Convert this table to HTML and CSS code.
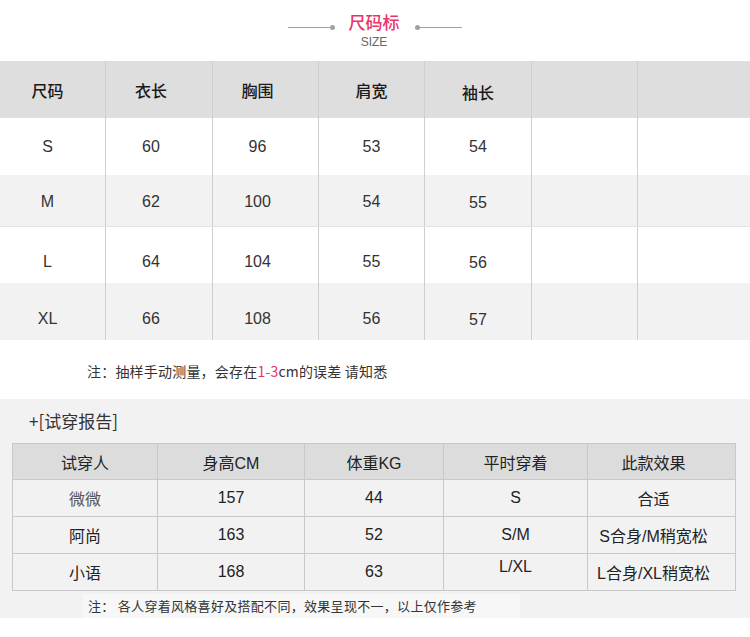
FILE: index.html
```html
<!DOCTYPE html>
<html lang="zh">
<head>
<meta charset="utf-8">
<title>尺码标</title>
<link rel="stylesheet" href="styles.css">
</head>
<body>
<header class="title-bar">
  <span class="line"></span><span class="dot"></span>
  <div class="title">
    <div class="title-cn">尺码标</div>
    <div class="title-en">SIZE</div>
  </div>
  <span class="dot"></span><span class="line"></span>
</header>

<div class="size-table">
  <div class="srow head">
    <div class="c">尺码</div><div class="c">衣长</div><div class="c">胸围</div><div class="c">肩宽</div><div class="c low2">袖长</div><div class="c"></div><div class="c"></div>
  </div>
  <div class="srow white r1">
    <div class="c">S</div><div class="c">60</div><div class="c">96</div><div class="c">53</div><div class="c">54</div><div class="c"></div><div class="c"></div>
  </div>
  <div class="srow gray r2">
    <div class="c">M</div><div class="c">62</div><div class="c">100</div><div class="c">54</div><div class="c low2">55</div><div class="c"></div><div class="c"></div>
  </div>
  <div class="srow white r3">
    <div class="c">L</div><div class="c">64</div><div class="c">104</div><div class="c">55</div><div class="c low">56</div><div class="c"></div><div class="c"></div>
  </div>
  <div class="srow gray r4">
    <div class="c">XL</div><div class="c">66</div><div class="c">108</div><div class="c">56</div><div class="c low">57</div><div class="c"></div><div class="c"></div>
  </div>
</div>

<p class="note">注：抽样手动测量，会存在<span class="red">1-3</span>cm的误差 请知悉</p>

<section class="report">
  <div class="report-title">+[试穿报告]</div>
  <div class="rtable">
    <div class="rrow rhead">
      <div class="rc">试穿人</div><div class="rc">身高CM</div><div class="rc">体重KG</div><div class="rc">平时穿着</div><div class="rc">此款效果</div>
    </div>
    <div class="rrow">
      <div class="rc light">微微</div><div class="rc">157</div><div class="rc">44</div><div class="rc">S</div><div class="rc">合适</div>
    </div>
    <div class="rrow">
      <div class="rc">阿尚</div><div class="rc">163</div><div class="rc">52</div><div class="rc">S/M</div><div class="rc">S合身/M稍宽松</div>
    </div>
    <div class="rrow">
      <div class="rc">小语</div><div class="rc">168</div><div class="rc">63</div><div class="rc up">L/XL</div><div class="rc">L合身/XL稍宽松</div>
    </div>
  </div>
  <div class="foot-note">注： 各人穿着风格喜好及搭配不同，效果呈现不一，以上仅作参考</div>
</section>
</body>
</html>
```
FILE: styles.css
```css
* { box-sizing: border-box; }
html, body { margin: 0; padding: 0; background: #fff; }
body {
  width: 750px;
  font-family: "Liberation Sans", "Noto Sans CJK SC", sans-serif;
  color: #333;
}

.title-bar {
  height: 61px;
  display: flex;
  align-items: flex-start;
  justify-content: center;
  padding-top: 11px;
}
.title-bar .line {
  width: 42px;
  height: 1px;
  background: #a0a0a0;
  margin-top: 16px;
}
.title-bar .dot {
  width: 5px;
  height: 5px;
  border-radius: 50%;
  background: #a0a0a0;
  margin-top: 14px;
}
.title {
  margin: 0 12px 0 10px;
  text-align: center;
  width: 58px;
}
.title-cn {
  color: #e8336a;
  font-size: 17px;
  line-height: 22px;
  height: 22px;
  font-weight: 500;
  font-family: "Noto Sans CJK SC", sans-serif;
}
.title-en {
  color: #666;
  font-size: 12px;
  line-height: 13px;
  margin-top: 3px;
}

.size-table { width: 750px; }
.srow {
  display: grid;
  grid-template-columns: 106px 107px 106px 106px 107px 106px 1fr;
  font-size: 16px;
}
.srow .c {
  display: flex;
  align-items: center;
  justify-content: center;
  border-right: 1px solid #cfcfcf;
}
.srow .c:last-child { border-right: none; }
.srow .c:nth-child(1) { padding-right: 10px; }
.srow .c:nth-child(2), .srow .c:nth-child(3) { padding-right: 16px; }
.srow.head {
  height: 57px;
  background: #dedede;
  font-family: "Noto Sans CJK SC", sans-serif;
  font-weight: 500;
  color: #1a1a1a;
}
.srow.white { background: #fff; }
.srow.gray { background: #f2f2f2; }
.srow.r1 { height: 57px; }
.srow.r2 { height: 52px; border-bottom: 1px solid #e2e2e2; }
.srow.r2 .c { padding-top: 3px; }
.srow.r3 { height: 56px; }
.srow.r4 { height: 57px; }
.srow .c.low2 { padding-top: 5px; }
.srow.r3 .c, .srow.r4 .c { padding-top: 14px; }
.srow.r3 .c.low, .srow.r4 .c.low { padding-top: 16px; }

.note {
  margin: 0;
  height: 59px;
  padding-left: 87px;
  padding-top: 22px;
  font-size: 14px;
  line-height: 18px;
  letter-spacing: 0.2px;
  color: #333;
  font-family: "Noto Sans CJK SC", sans-serif;
}
.note .red { color: #e8336a; }

.report {
  background: #f2f2f2;
  height: 219px;
  padding-top: 11px;
}
.report-title {
  padding-left: 29px;
  font-size: 17px;
  line-height: 22px;
  height: 33px;
  font-family: "Noto Sans CJK SC", sans-serif;
}
.rtable {
  margin-left: 12px;
  width: 724px;
  border: 1px solid #c8c8c8;
}
.rrow {
  display: grid;
  grid-template-columns: 145px 147px 139px 144px 1fr;
  height: 37px;
  border-top: 1px solid #c8c8c8;
  font-size: 16px;
}
.rrow:first-child { border-top: none; }
.rrow.rhead { height: 35px; background: #dcdcdc; }
.rc {
  display: flex;
  align-items: center;
  justify-content: center;
  border-right: 1px solid #c8c8c8;
  color: #222;
}
.rc:last-child { border-right: none; padding-right: 16px; }
.rc.light { color: #555; }
.rc.up { padding-bottom: 10px; }

.foot-note {
  margin: 3px 0 0 83px;
  width: 437px;
  height: 26px;
  background: #f7f7f7;
  padding-left: 5px;
  font-size: 13px;
  line-height: 24px;
  letter-spacing: 0.3px;
  font-family: "Noto Sans CJK SC", sans-serif;
  color: #333;
}
```
